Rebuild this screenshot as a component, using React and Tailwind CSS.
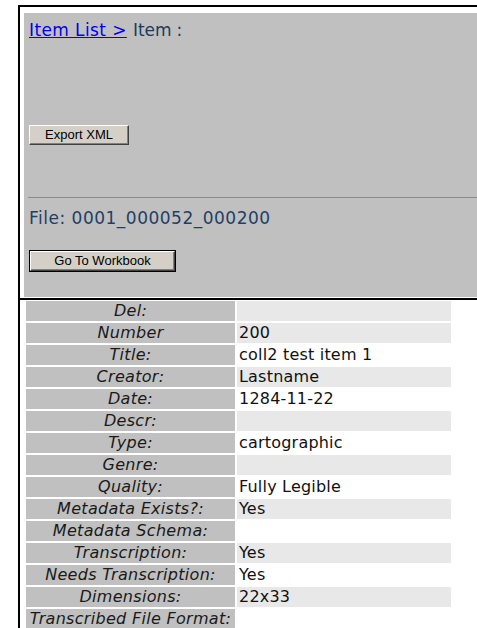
import React from "react";

const rows = [
  ["Del:", "", true],
  ["Number", "200", true],
  ["Title:", "coll2 test item 1", false],
  ["Creator:", "Lastname", true],
  ["Date:", "1284-11-22", false],
  ["Descr:", "", true],
  ["Type:", "cartographic", false],
  ["Genre:", "", true],
  ["Quality:", "Fully Legible", false],
  ["Metadata Exists?:", "Yes", true],
  ["Metadata Schema:", "", false],
  ["Transcription:", "Yes", true],
  ["Needs Transcription:", "Yes", false],
  ["Dimensions:", "22x33", true],
  ["Transcribed File Format:", "", false],
];

function Bevel({ children, width, isDefault }) {
  const inner = (
    <div
      className="flex h-[20px] items-center justify-center border-t border-l border-r border-b border-t-white border-l-white border-r-[#404040] border-b-[#404040] bg-[#d4d0c8] text-[13px] text-black shadow-[inset_-1px_-1px_0_#808080]"
      style={{ width: isDefault ? width - 2 : width, fontFamily: '"Liberation Sans", Arial, sans-serif' }}
    >
      {children}
    </div>
  );
  if (isDefault) {
    return <div className="w-fit border border-black">{inner}</div>;
  }
  return inner;
}

export default function App() {
  return (
    <div
      className="h-[628px] w-[477px] overflow-hidden bg-white"
      style={{ fontFamily: '"DejaVu Sans", Verdana, sans-serif' }}
    >
      <div className="ml-[18px] mt-[5px] border-l-2 border-t-2 border-black">
        <div className="border-b-2 border-black pb-[1px] pl-[4px] pt-[6px]">
          <div className="h-[284px] bg-[#c0c0c0] pl-[5px] pt-[7px]">
            <div className="flex h-[20px] items-center text-[17px] leading-[20px]">
              <a href="#" className="tracking-[0.4px] text-[#0000ee] underline">
                Item List &gt;
              </a>
              <span className="ml-[6px] text-[#1c3a5e]">
                Item<span className="ml-[5px]">:</span>
              </span>
            </div>
            <div className="mt-[85px]">
              <Bevel width={100}>Export XML</Bevel>
            </div>
            <div className="-ml-[1px] mt-[52px] h-[1px] bg-[#8c8c8c]" />
            <div className="mt-[10px] h-[20px] text-[17px] leading-[20px] tracking-[0.5px] text-[#1f3f66]">
              File: 0001_000052_000200
            </div>
            <div className="mt-[22px]">
              <Bevel width={147} isDefault>
                Go To Workbook
              </Bevel>
            </div>
          </div>
        </div>
        <div className="ml-[6px] grid grid-cols-[209px_214px] gap-[2px] pt-[1px] text-[16px] leading-[20px]">
          {rows.map(([label, value, shaded]) => (
            <React.Fragment key={label}>
              <div className="h-[20px] bg-[#c0c0c0] text-center italic tracking-[0.3px] text-[#1a1a1a] whitespace-nowrap">
                {label}
              </div>
              <div
                className={
                  shaded
                    ? "h-[20px] bg-[#e8e8e8] pl-[2px] tracking-[0.2px] text-[#111]"
                    : "h-[20px] bg-white pl-[2px] tracking-[0.2px] text-[#111]"
                }
              >
                {value}
              </div>
            </React.Fragment>
          ))}
        </div>
      </div>
    </div>
  );
}
